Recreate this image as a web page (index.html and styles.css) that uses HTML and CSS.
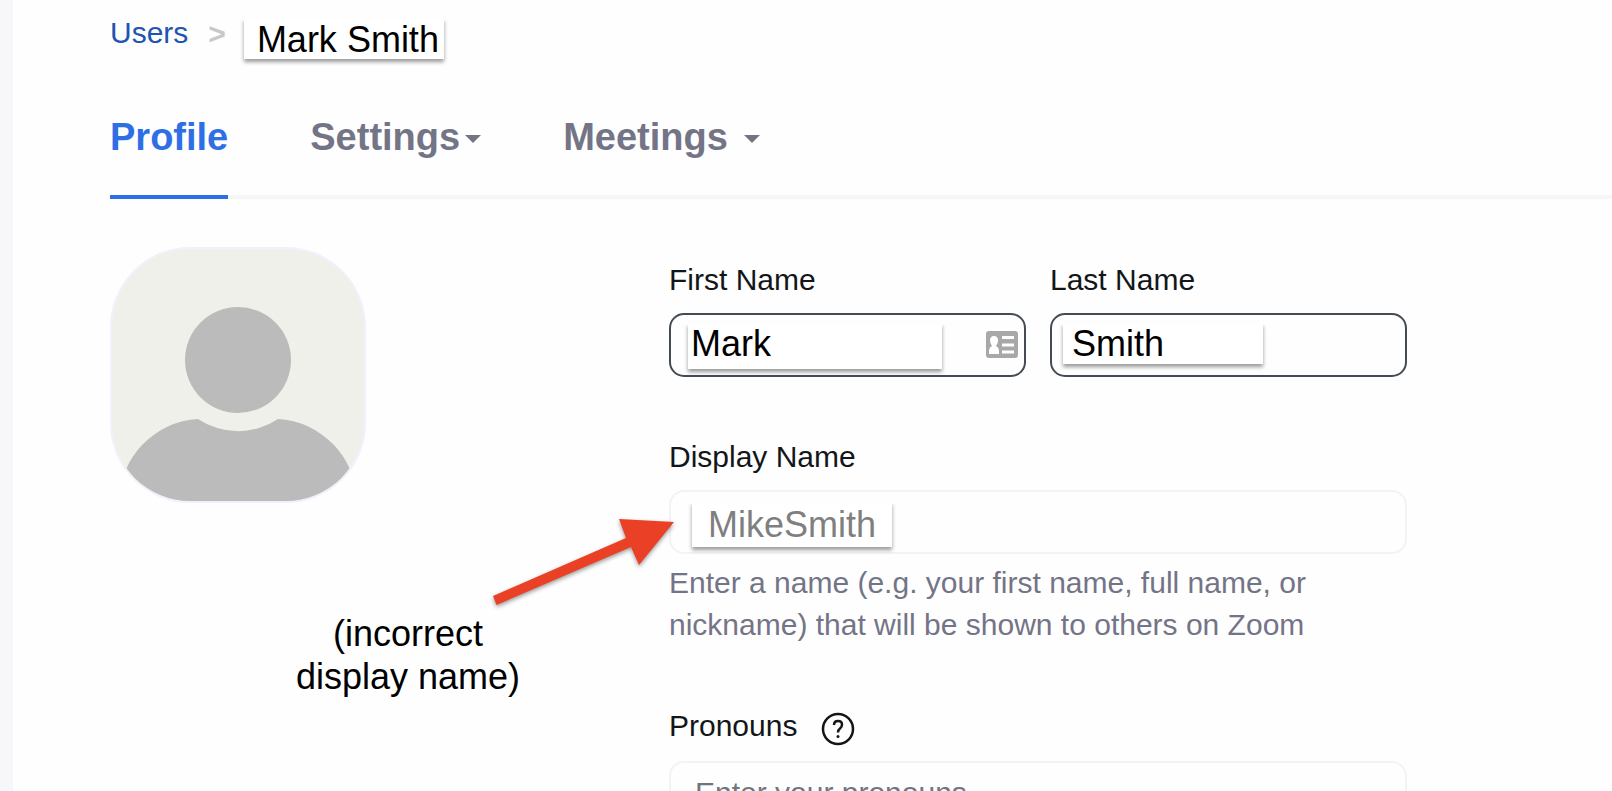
FILE: index.html
```html
<!DOCTYPE html>
<html lang="en">
<head>
<meta charset="UTF-8">
<meta name="viewport" content="width=device-width, initial-scale=1.0">
<title>User Profile</title>
<link rel="stylesheet" href="styles.css">
</head>
<body>

<main class="page">
  <nav class="breadcrumb" aria-label="Breadcrumb">
    <a href="#users">Users</a>
    <span class="separator">&gt;</span>
    <span class="user-name">Mark Smith</span>
  </nav>

  <nav class="tabs" aria-label="User sections">
    <a class="tab active" href="#profile">Profile</a>
    <button class="tab" type="button">Settings<span class="caret"></span></button>
    <button class="tab wide" type="button">Meetings<span class="caret"></span></button>
  </nav>

  <div class="content">
    <div class="side">
      <div class="avatar">
        <svg viewBox="0 0 252 252" role="img" aria-label="Profile picture">
          <circle cx="126" cy="111" r="53"/>
          <path d="M7 252A84 84 0 0 1 86 170A72 72 0 0 0 166 170A84 84 0 0 1 245 252Z"/>
        </svg>
      </div>
      <p class="note">(incorrect display name)</p>
      <svg class="arrow" viewBox="0 0 190 100" aria-hidden="true">
        <path d="M4 86L137 28L130 9L185 12L150 55L142 37L7.500 95Z"/>
      </svg>
    </div>

    <form class="profile-form">
      <div class="name-row">
        <div class="field">
          <label for="firstName">First Name</label>
          <div class="box strong">
            <input class="value first" type="text" id="firstName" value="Mark">
            <svg class="card-icon" viewBox="0 0 32 27" aria-hidden="true">
              <rect width="32" height="27" rx="3" fill="#a8a8a8"/>
              <path d="M3 23V20Q3 16.500 6 15Q4 12.500 4 9.500Q4 5 8 5Q12 5 12 9.500Q12 12.500 10 15Q13 16.500 13 20V23Z" fill="#fff"/>
              <path d="M16 6.500H28M16 14H28M16 21H28" stroke="#fff" stroke-width="3"/>
            </svg>
          </div>
        </div>
        <div class="field">
          <label for="lastName">Last Name</label>
          <div class="box strong">
            <input class="value last" type="text" id="lastName" value="Smith">
          </div>
        </div>
      </div>

      <div class="field">
        <label for="displayName">Display Name</label>
        <div class="box">
          <input class="value display" type="text" id="displayName" value="MikeSmith" aria-describedby="displayHelp">
        </div>
        <p class="help" id="displayHelp">Enter a name (e.g. your first name, full name, or nickname) that will be shown to others on Zoom</p>
      </div>

      <div class="field">
        <div class="label-row">
          <label for="pronouns">Pronouns</label>
          <button class="help-button" type="button" aria-label="About pronouns">
            <svg viewBox="0 0 34 34" aria-hidden="true">
              <circle cx="17" cy="17" r="15"/>
              <path d="M13 13Q13 9 17 9Q21 9 21 12.500Q21 15 19 16.500Q17 18 17 20.500"/>
              <circle class="dot" cx="17" cy="24.500" r="1.500"/>
            </svg>
          </button>
        </div>
        <input class="box plain" type="text" id="pronouns" placeholder="Enter your pronouns">
      </div>
    </form>
  </div>
</main>

</body>
</html>
```
FILE: styles.css
```css
* {
    box-sizing: border-box;
}

body {
    margin: 0;
    min-height: 100vh;
    overflow: hidden;
    background-color: #fefefe;
    border-left: 13px solid #f7f7f9;
    font-family: "Liberation Sans", Arial, sans-serif;
    font-size: 30px;
    line-height: 36px;
    color: #131619;
}

p {
    margin: 0;
}

button, input {
    font: inherit;
}

.page {
    padding: 15px 0 0 97px;
}

/* breadcrumb */
.breadcrumb {
    display: flex;
    align-items: flex-start;
}

.breadcrumb a {
    color: #1f55b0;
    text-decoration: none;
}

.separator {
    margin: 1px 18px 0 20px;
    color: #c8c8c8;
    font-weight: bold;
}

.user-name {
    margin-top: 3px;
    padding: 2px 5px 0 13px;
    font-size: 36px;
    line-height: 39px;
    color: #000;
}

.user-name, .value {
    background-color: #fff;
    box-shadow: 0 3px 4px rgba(0, 0, 0, 0.4);
    clip-path: inset(2px -4px -8px -4px);
}

/* tabs */
.tabs {
    display: flex;
    gap: 82px;
    margin-top: 56px;
    box-shadow: inset 0 -4px #f6f6f7;
}

.tab {
    display: flex;
    align-items: center;
    padding: 0 0 36px;
    border: none;
    border-bottom: 4px solid transparent;
    background: none;
    color: #747487;
    font-size: 38px;
    font-weight: bold;
    line-height: 44px;
    text-decoration: none;
    cursor: pointer;
}

.tab.active {
    border-bottom-color: #2f6fe6;
    border-radius: 3px 3px 0 0;
    color: #2f6fe6;
}

.caret {
    margin: 4px 0 0 5px;
    border-top: 8px solid #747487;
    border-left: 8px solid transparent;
    border-right: 8px solid transparent;
}

.wide .caret {
    margin-left: 16px;
}

.content {
    display: grid;
    grid-template-columns: 559px minmax(0, 738px);
    padding-top: 48px;
}

/* avatar and note */
.side {
    position: relative;
}

.avatar {
    width: 256px;
    height: 256px;
    border: 2px solid #f2f0fd;
    border-radius: 80px;
    background-color: #f0f0ea;
    overflow: hidden;
}

.avatar svg {
    display: block;
    fill: #bbb;
}

.note {
    width: 240px;
    margin: 109px 0 0 178px;
    color: #000;
    font-size: 36px;
    line-height: 43px;
    text-align: center;
}

.arrow {
    position: absolute;
    top: 263px;
    left: 379px;
    width: 190px;
    height: 100px;
    fill: #ea4126;
    filter: drop-shadow(0 2px 2px rgba(0, 0, 0, 0.4));
}

/* form */
.profile-form {
    display: flex;
    flex-direction: column;
    gap: 62px;
    padding-top: 15px;
}

.name-row {
    display: grid;
    grid-template-columns: 1fr 1fr;
    gap: 24px;
}

.field {
    display: flex;
    flex-direction: column;
}

.box {
    display: flex;
    align-items: flex-start;
    justify-content: space-between;
    width: 100%;
    height: 64px;
    margin-top: 15px;
    border: 2px solid #f3f3f4;
    border-radius: 15px;
    background-color: #fefefe;
}

.strong {
    border-color: #444b53;
}

.value {
    min-width: 0;
    border: none;
    color: #000;
    font-size: 36px;
}

.first {
    width: 254px;
    height: 46px;
    margin: 8px 0 0 17px;
    padding: 0 0 5px 3px;
}

.last {
    width: 200px;
    height: 41px;
    margin: 8px 0 0 11px;
    padding: 0 0 0 9px;
}

.display {
    width: 200px;
    height: 45px;
    margin: 10px 0 0 21px;
    padding: 0 0 0 16px;
    color: #7f7f7f;
}

.card-icon {
    flex: none;
    width: 32px;
    height: 27px;
    margin: 16px 6px 0 0;
}

.help {
    margin-top: 8px;
    color: #747487;
    line-height: 42px;
}

.label-row {
    display: flex;
    align-items: flex-start;
    gap: 24px;
}

.help-button {
    margin-top: 4px;
    padding: 0;
    border: none;
    background: none;
    cursor: pointer;
}

.help-button svg {
    display: block;
    width: 34px;
    height: 34px;
    fill: none;
    stroke: #131619;
    stroke-width: 2.5;
}

.help-button .dot {
    fill: #131619;
    stroke: none;
}

.plain {
    padding: 0 24px;
}

.plain::placeholder {
    color: #6e7680;
}
```
